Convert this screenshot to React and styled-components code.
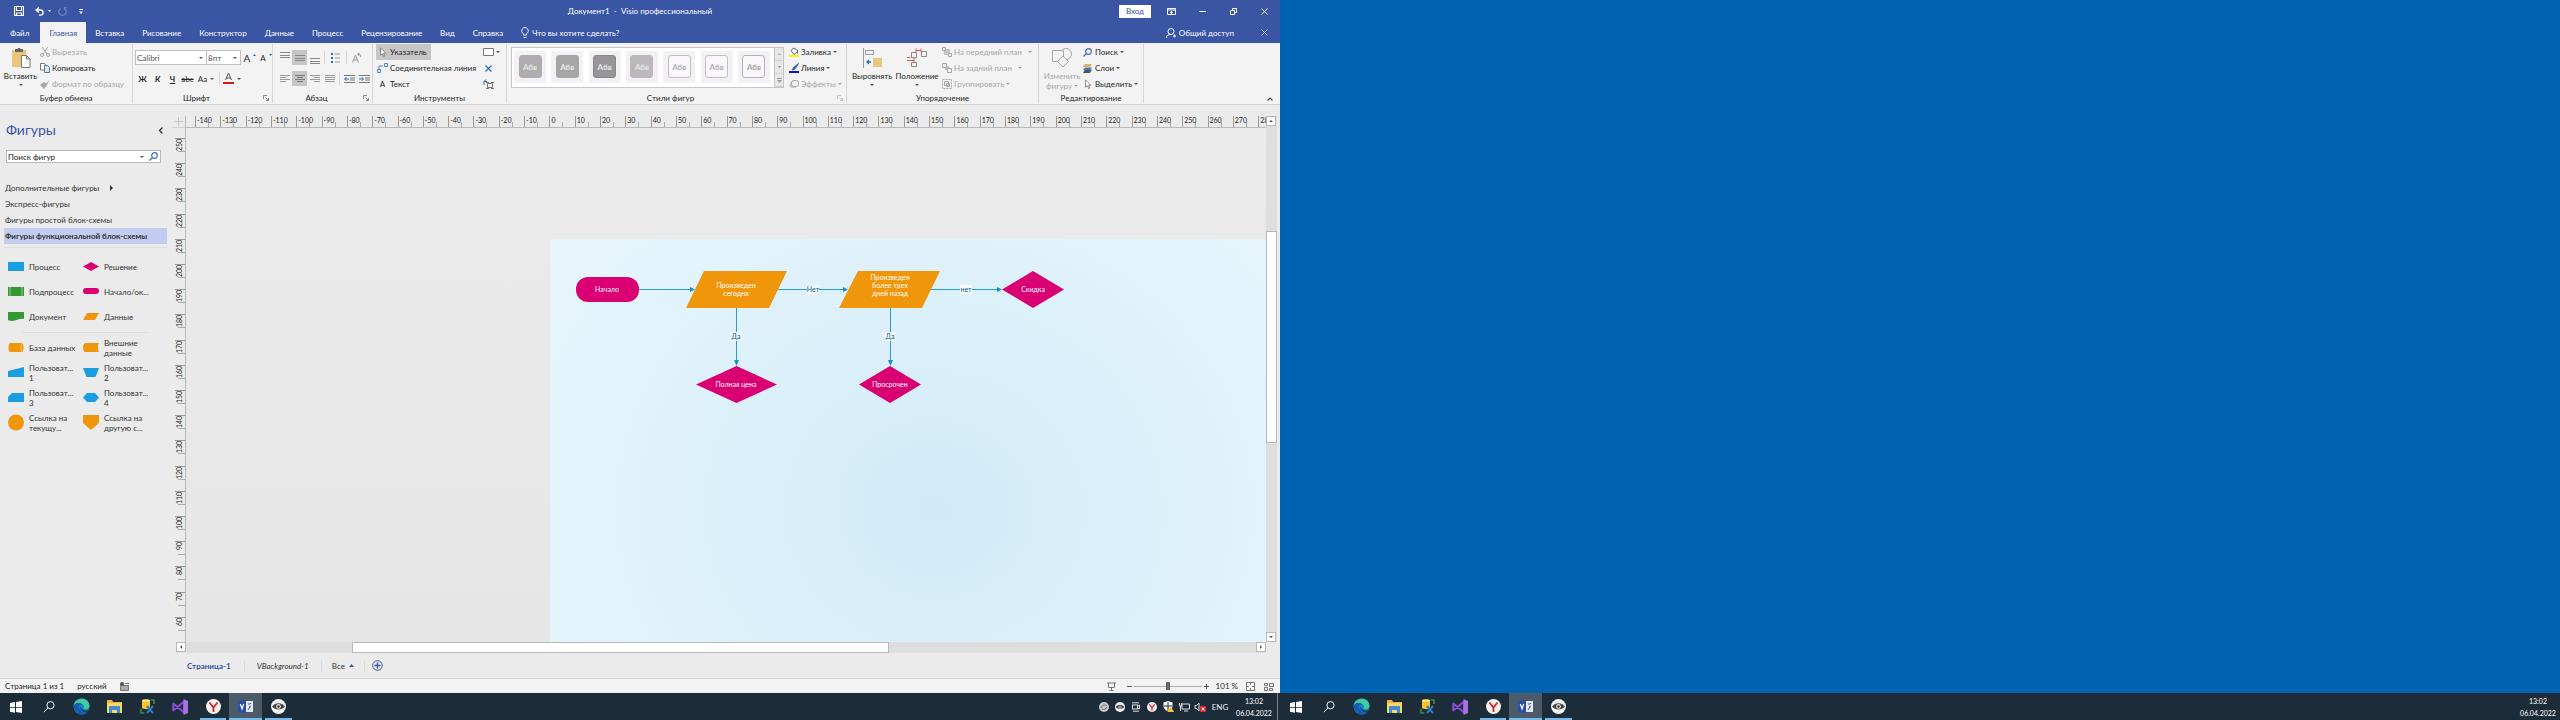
import React from "react";
import styled, { createGlobalStyle, css } from "styled-components";

const GlobalStyle = createGlobalStyle`
  * { box-sizing: border-box; }
  body { margin: 0; background: #0063b1; }
  body, button, input, select {
    font-family: Lato, "Open Sans", "Noto Sans", sans-serif;
    font-size: 8px;
    line-height: 10px;
    color: #262626;
  }
  button { border: 0; padding: 0; background: none; white-space: nowrap; }
  svg { display: block; flex: none; }
`;

const BLUE = "#3955a3";
const GREY = "#a6a6a6";

/* ---------- shared parts ---------- */

const Desktop = styled.div`
  display: flex;
  min-height: 100vh;
`;
const Monitor = styled.section`
  flex: 1 1 0;
  min-width: 0;
  display: flex;
  flex-direction: column;
  background: #0063b1;
`;
const Wallpaper = styled.div`
  flex: 1;
`;
const Svg = ({ w, h, children, vb }) => (
  <svg width={w} height={h} viewBox={vb || `0 0 ${w} ${h}`} fill="none" aria-hidden="true">
    {children}
  </svg>
);
const Caret = ({ color = "#555" }) => (
  <Svg w={4} h={2}>
    <path d="M0 0h4L2 2z" fill={color} />
  </Svg>
);

/* ---------- title bar and tabs ---------- */

const TitleBar = styled.header`
  display: grid;
  grid-template-columns: 1fr auto 1fr;
  align-items: center;
  height: 22px;
  background: ${BLUE};
  color: #fff;
`;
const QuickAccess = styled.div`
  display: flex;
  align-items: center;
  padding-left: 14px;
`;
const QuickButton = styled.button`
  display: flex;
  align-items: center;
  gap: 4px;
  margin-right: ${(p) => p.$after || 0}px;
`;
const WindowButtons = styled.div`
  display: flex;
  align-items: center;
  justify-content: flex-end;
`;
const SignIn = styled.button`
  width: 32px;
  height: 13px;
  margin-right: 5px;
  background: #fff;
  color: ${BLUE};
`;
const WindowButton = styled.button`
  display: grid;
  place-items: center;
  width: 31px;
  height: 20px;
`;
const TabBar = styled.nav`
  display: flex;
  height: 21px;
  padding-left: 1px;
  background: ${BLUE};
`;
const Tab = styled.button`
  padding: 0 9px;
  color: #fff;
  ${(p) => p.$file && css`margin-right: 2px;`}
  ${(p) => p.$active && css`background: #f3f3f3; color: ${BLUE};`}
`;
const TellMe = styled.button`
  display: flex;
  align-items: center;
  gap: 3px;
  margin-left: 9px;
  color: #fff;
`;
const Share = styled(TellMe)`
  margin-left: auto;
  margin-right: 15px;
`;

/* ---------- ribbon ---------- */

const Ribbon = styled.div`
  display: flex;
  height: 62px;
  padding-top: 1px;
  background: #f3f3f3;
  border-bottom: 1px solid #d2d2d2;
`;
const Group = styled.section`
  display: flex;
  flex-direction: column;
  flex: none;
  width: ${(p) => p.$width}px;
  margin-bottom: 1px;
  border-right: 1px solid #d6d6d6;
`;
const GroupBody = styled.div`
  display: flex;
  height: 48px;
  padding: 0 ${(p) => p.$right || 0}px 0 ${(p) => p.$left || 0}px;
  justify-content: ${(p) => (p.$spread ? "space-between" : "flex-start")};
`;
const GroupFooter = styled.footer`
  display: grid;
  grid-template-columns: ${(p) => (p.$launch ? "1fr 12px" : "1fr")};
  place-items: center;
  height: 11px;
`;
const RibbonEnd = styled.div`
  flex: 1;
  display: flex;
  align-items: flex-end;
  justify-content: flex-end;
  padding: 0 7px 3px;
`;
const BigButton = styled.button`
  display: flex;
  flex-direction: column;
  align-items: center;
  width: ${(p) => p.$width}px;
  padding-top: 4px;
  gap: 3px;
  color: ${(p) => (p.disabled ? GREY : "#262626")};
`;
const CaretLine = styled.span`
  display: flex;
  align-items: center;
  justify-content: center;
  gap: 2px;
`;
const Stack = styled.div`
  display: flex;
  flex-direction: column;
  align-items: flex-start;
  padding-top: ${(p) => p.$top || 0}px;
`;
const SmallButton = styled.button`
  display: flex;
  align-items: center;
  gap: 2px;
  height: 16px;
  padding: 0 ${(p) => (p.$pressed ? 4 : 1)}px 0 1px;
  color: ${(p) => (p.disabled ? GREY : "#262626")};
  background: ${(p) => (p.$pressed ? "#c6c6c6" : "transparent")};
`;
const IconCell = styled.span`
  display: grid;
  place-items: center;
  width: 11px;
`;
const ToolRow = styled.div`
  display: flex;
  align-items: center;
  height: 21px;
`;
const ToolButton = styled.button`
  display: flex;
  align-items: center;
  justify-content: center;
  gap: 3px;
  width: ${(p) => p.$width || 15}px;
  height: 15px;
  font-size: ${(p) => (p.$large ? 10 : 8)}px;
  font-weight: ${(p) => (p.$bold ? 700 : 400)};
  font-style: ${(p) => (p.$italic ? "italic" : "normal")};
  text-decoration: ${(p) => p.$line || "none"};
  background: ${(p) => (p.$pressed ? "#c6c6c6" : "transparent")};
`;
const Separator = styled.span`
  width: 1px;
  height: 13px;
  margin: 0 2px;
  background: #d6d6d6;
`;
const SelectBox = styled.label`
  display: grid;
  align-items: center;
  width: ${(p) => p.$width}px;
  height: 15px;
  margin-right: -1px;
  background: #fff;
  border: 1px solid #c0c0c0;
  select, svg { grid-area: 1 / 1; }
  select { appearance: none; border: 0; padding: 0 1px; background: none; outline: 0; color: #555; }
  svg { justify-self: end; margin-right: 3px; pointer-events: none; }
`;
const Gallery = styled.div`
  display: flex;
  width: 273px;
  height: 41px;
  margin: 3px 4px 0 0;
  background: #fff;
  border: 1px solid #c6c6c6;
`;
const GalleryItems = styled.div`
  flex: 1;
  display: flex;
  align-items: center;
  justify-content: space-between;
  padding: 0 4px 2px 2px;
`;
const StyleItem = styled.button`
  display: grid;
  place-items: center;
  width: 32px;
  height: 32px;
  background: #f5f0f7;
`;
const StyleSwatch = styled.span`
  display: grid;
  place-items: center;
  width: 23px;
  height: 23px;
  border: 1px solid ${(p) => p.$edge};
  border-radius: 3px;
  background: ${(p) => p.$fill};
  color: ${(p) => p.$ink};
  font-weight: 700;
`;
const GallerySteps = styled.div`
  display: grid;
  grid-template-rows: repeat(3, 1fr);
  width: 9px;
  background: #e8e8e8;
  border-left: 1px solid #c6c6c6;
  button { display: grid; place-items: center; border-bottom: 1px solid #d0d0d0; }
`;

/* ---------- workspace ---------- */

const Workspace = styled.main`
  flex: 1;
  display: flex;
  background: #ebebeb;
`;
const ShapesPane = styled.aside`
  width: 169px;
  flex: none;
  padding: 16px 2px 0 4px;
`;
const PaneHead = styled.div`
  display: flex;
  align-items: center;
  justify-content: space-between;
  padding: 0 4px 0 2px;
  h2 { margin: 0; font-size: 14px; line-height: 18px; font-weight: 400; color: ${BLUE}; }
`;
const SearchBox = styled.form`
  display: flex;
  align-items: center;
  gap: 5px;
  height: 13px;
  margin: 11px 6px 17px 2px;
  padding-right: 2px;
  background: #fff;
  border: 1px solid #b8b8b8;
  input { flex: 1; min-width: 0; border: 0; padding: 0 1px; background: none; color: #222; outline: 0; }
`;
const StencilButton = styled.button`
  display: flex;
  align-items: center;
  gap: 11px;
  width: 100%;
  height: 16px;
  padding-left: 1px;
  color: #333;
  ${(p) => p.$active && css`background: #c1ccf0; font-weight: 700;`}
`;
const ShapeGrid = styled.div`
  display: grid;
  grid-template-columns: 75px 1fr;
  grid-auto-rows: 25px;
  margin-top: ${(p) => p.$top}px;
  padding-left: 4px;
`;
const Rule = styled.hr`
  margin: 3px ${(p) => p.$side}px 0;
  border: 0;
  border-top: 1px solid #dedede;
`;
const ShapeButton = styled.button`
  display: flex;
  align-items: center;
  gap: 5px;
  text-align: left;
  white-space: pre;
  color: #333;
`;

const CanvasArea = styled.div`
  flex: 1;
  min-width: 0;
  display: grid;
  grid-template-columns: 14px minmax(0, 1fr) 11px;
  grid-template-rows: 12px minmax(0, 1fr) 11px 25px;
  padding: 11px 3px 0 3px;
`;
const RulerCorner = styled.div`
  display: grid;
  place-items: center;
  border-right: 1px solid #b8b8b8;
  border-bottom: 1px solid #cfcfcf;
`;
const HRuler = styled.div`
  display: flex;
  min-width: 0;
  overflow: hidden;
  padding-left: 9px;
  border-bottom: 1px solid #b8b8b8;
`;
const HMark = styled.span`
  flex: 0 0 calc(100% / 42.3);
  height: 11px;
  padding-left: 1px;
  border-left: 1px solid #999;
  font-size: 7px;
  line-height: 9px;
  background: linear-gradient(#aaa, #aaa) 12px 100% / 1px 5px no-repeat;
`;
const VRuler = styled.div`
  display: flex;
  flex-direction: column;
  padding-top: 10px;
  padding-left: 3px;
  border-right: 1px solid #b8b8b8;
`;
const VMark = styled.span`
  flex: 1;
  border-top: 1px solid #999;
  font-size: 7px;
  line-height: 8px;
  background: linear-gradient(#aaa, #aaa) 100% 12px / 7px 1px no-repeat;
  b { display: block; width: 8px; height: 14px; writing-mode: vertical-rl; transform: rotate(180deg); font-weight: 400; text-align: right; }
`;
const CanvasView = styled.div`
  display: flex;
  min-width: 0;
  min-height: 0;
  overflow: hidden;
  padding: 111px 0 0 364px;
  background: linear-gradient(#ebebeb, #e6e6e6);
`;
const Page = styled.div`
  flex: 1;
  min-width: 0;
  min-height: 0;
  background: radial-gradient(ellipse 440px 400px at 385px 270px, #d0eaf8, #d8eefa 30%, #e1f3fb 75%, #e6f5fc);
  svg { overflow: visible; }
  text { font-size: 7px; text-anchor: middle; }
`;
const Bar = styled.div`
  display: flex;
  flex-direction: ${(p) => (p.$vertical ? "column" : "row")};
  background: #dedede;
  ${(p) => p.$vertical && css`grid-row: 1 / 3; grid-column: 3;`}
  ${(p) => !p.$vertical && css`grid-column: 1 / 3; margin-left: 4px;`}
`;
const BarButton = styled.button`
  display: grid;
  place-items: center;
  flex: none;
  width: 10px;
  height: 10px;
  background: #fff;
  border: 1px solid #b8b8b8;
`;
const Space = styled.span`
  flex: ${(p) => p.$grow};
`;
const Thumb = styled(Space)`
  background: #fff;
  border: 1px solid #b8b8b8;
`;
const PageTabs = styled.div`
  grid-column: 1 / 4;
  display: flex;
  align-items: center;
  padding-left: 14px;
`;
const PageTab = styled.button`
  display: flex;
  align-items: center;
  gap: 4px;
  height: 12px;
  padding: 0 ${(p) => p.$pad}px 0 ${(p) => (p.$first ? 1 : p.$pad)}px;
  border-right: ${(p) => (p.$last ? 0 : "1px solid #dcdcdc")};
  font-weight: ${(p) => (p.$active ? 700 : 400)};
  font-style: ${(p) => (p.$italic ? "italic" : "normal")};
  color: ${(p) => (p.$active ? BLUE : "#333")};
`;
const StatusBar = styled.footer`
  display: flex;
  align-items: center;
  height: 15px;
  padding: 0 6px 0 5px;
  background: #f3f3f3;
  border-top: 1px solid #d6d6d6;
`;
const StatusText = styled.span`
  margin-right: 13px;
`;
const ZoomTools = styled.div`
  display: flex;
  align-items: center;
  margin-left: auto;
  button { display: grid; place-items: center; }
`;
const ZoomRange = styled.input`
  appearance: none;
  width: 68px;
  height: 9px;
  margin: 0 2px;
  background: linear-gradient(#aaa, #aaa) 0 4px / 100% 1px no-repeat;
  &::-webkit-slider-thumb { appearance: none; width: 4px; height: 8px; background: #666; }
`;
const ViewButton = styled.button`
  margin-right: ${(p) => p.$after || 0}px;
`;
const ZoomLabel = styled.button`
  margin: 0 8px 0 7px;
`;

/* ---------- taskbar ---------- */

const TaskBar = styled.footer`
  display: flex;
  height: 27px;
  background: #1c2c39;
`;
const TaskApps = styled.div`
  display: grid;
  grid-template-columns: repeat(9, 1fr);
  width: 295px;
`;
const TaskButton = styled.button`
  display: grid;
  place-items: center;
  padding-top: ${(p) => (p.$open ? 2 : 0)}px;
  border-bottom: ${(p) => (p.$open ? "2px solid #76b9ed" : "0")};
  margin: 0 ${(p) => (p.$open && !p.$active ? 3 : 0)}px;
  background: ${(p) => (p.$active ? "#4c5b68" : "transparent")};
`;
const Tray = styled.div`
  display: flex;
  align-items: center;
  margin-left: auto;
`;
const TrayButton = styled.button`
  display: grid;
  place-items: center;
  width: 16px;
`;
const Language = styled.button`
  width: 24px;
  color: #f0f0f0;
`;
const Clock = styled.time`
  width: 38px;
  margin: 0 ${(p) => (p.$edge ? 3 : 4)}px 0 3px;
  text-align: center;
  font-size: 7px;
  line-height: 12px;
  color: #fff;
`;
const ShowDesktop = styled.button`
  width: 3px;
  align-self: stretch;
  border-left: 1px solid #77838c;
`;

/* ---------- icons ---------- */

const AppIcons = {
  start: (
    <Svg w={12} h={12}>
      <path d="M0 2l5-1v5H0zM6 1l6-1v6H6zM0 6.800h5v5l-5-1zM6 6.800h6V12l-6-1z" fill="#fff" />
    </Svg>
  ),
  search: (
    <Svg w={12} h={12}>
      <circle cx="7.500" cy="4.200" r="3.600" stroke="#fff" />
      <path d="M4.800 7L.8 11.200" stroke="#fff" />
    </Svg>
  ),
  edge: (
    <Svg w={17} h={17}>
      <circle cx="8.500" cy="8.500" r="8" fill="#1583c9" />
      <path d="M.6 8C1.500-1 16-2 16.500 8c0 3-4 4-6 2.400 1-2 .3-4.500-2.400-4.700C5 5.500 2.500 6 .6 8z" fill="#42c9a0" />
      <path d="M.6 8C2 4 7 4 9 6.200 5 6 5 13 11 14.500c1 .3 3-.3 4-1C11 18.500 2 18 .6 8z" fill="#1160b0" />
      <path d="M8.500 6.500c-2 1.500-1 5.500 3.500 6 2 .2 3-.3 4-1-.7 1.500-1 2-2 2.800-6 .8-8.500-4.800-5.500-7.800z" fill="#1c2c39" opacity=".85" />
    </Svg>
  ),
  folder: (
    <Svg w={15} h={13}>
      <path d="M0 0h5l1 2h9v11H0z" fill="#f3b53a" />
      <path d="M0 3h15v10H0z" fill="#fbd76b" />
      <path d="M2 6h11v7h-3v-3H5v3H2z" fill="#3f8fcf" />
    </Svg>
  ),
  db: (
    <Svg w={15} h={15}>
      <path d="M2 1h8v8c-2 1.500-6 1.500-8 0z" fill="#f8c52c" />
      <ellipse cx="6" cy="1.500" rx="4" ry="1.200" fill="#fde68a" />
      <path d="M10.500 1H14v4M1 10v4h3.500" stroke="#4caf50" strokeWidth="1.200" />
      <path d="M7 7l6 7M13 7l-6 7" stroke="#2c7fc4" strokeWidth="2" />
    </Svg>
  ),
  vs: (
    <Svg w={16} h={16}>
      <path d="M1.300 4.500v7L12 2.500v11L1.300 4.500z" stroke="#8a4fd0" strokeWidth="2" strokeLinejoin="round" />
      <path d="M11.500 0L16 2v12l-4.500 2z" fill="#a970e8" />
    </Svg>
  ),
  yandex: (
    <Svg w={15} h={15}>
      <circle cx="7.500" cy="7.500" r="7.500" fill="#f2f2f2" />
      <path d="M3.500 3.500L7.500 8.500l4-5M7.500 8v5" stroke="#d8201f" strokeWidth="1.800" />
    </Svg>
  ),
  visio: (
    <Svg w={15} h={13}>
      <path d="M6 1h9v11H6z" fill="#e8ecf8" />
      <path d="M0 1l8-1v13l-8-1z" fill="#2b4fa5" />
      <path d="M2.300 4L4 9l1.700-5" stroke="#fff" strokeWidth="1.200" />
      <path d="M10 4h2l1-1M11 7l2-1M10 10l2-3" stroke="#3955a3" />
    </Svg>
  ),
  eye: (
    <Svg w={15} h={15}>
      <circle cx="7.500" cy="7.500" r="7.500" fill="#f4f4f4" />
      <path d="M1 7.500c3-4.500 10-4.500 13 0-3 4-10 4-13 0z" fill="#444" />
      <circle cx="7.500" cy="7.500" r="2.400" fill="#ddd" />
      <circle cx="7.500" cy="7.500" r="1.200" fill="#333" />
    </Svg>
  ),
};

const apps = [
  ["start", "Пуск"],
  ["search", "Поиск"],
  ["edge", "Edge"],
  ["folder", "Проводник"],
  ["db", "SQL"],
  ["vs", "Visual Studio"],
  ["yandex", "Яндекс", true],
  ["visio", "Visio", true, true],
  ["eye", "Просмотр", true],
];

const trayIcons = [
  <Svg w={10} h={10}>
    <circle cx="5" cy="5" r="5" fill="#c9c9c9" />
    <path d="M2 6c1-3 4-4 6-2M3 7c2 1 4 0 5-2" stroke="#666" />
  </Svg>,
  <Svg w={10} h={10} vb="0 0 15 15">{AppIcons.eye.props.children}</Svg>,
  <Svg w={10} h={10}>
    <rect x="1.500" y="3" width="5" height="4" stroke="#ddd" />
    <path d="M6.500 4.500L8.500 3v4l-2-1M1 .8h7M2 9.200h6" stroke="#ddd" />
  </Svg>,
  <Svg w={10} h={10} vb="0 0 15 15">{AppIcons.yandex.props.children}</Svg>,
  <Svg w={11} h={11}>
    <path d="M5 0l4.500 1.500V5c0 3-2 4-4.500 5.500C2.500 9 .5 8 .5 5V1.500z" fill="#fff" />
    <path d="M5 1v9M1 5h8" stroke="#1c2c39" />
    <path d="M7.500 5l3.500 6H4.500z" fill="#f6c52c" />
  </Svg>,
  <Svg w={11} h={10}>
    <path d="M3 2h7.500v5H3zM5 9h4M.5 1v3h2v-3M1.500 4v5" stroke="#ddd" />
  </Svg>,
  <Svg w={12} h={10}>
    <path d="M1 3.500h1.500L5 1v8L2.500 6.500H1z" stroke="#ddd" />
    <rect x="6" y="4" width="6" height="6" rx="1" fill="#e02a2a" />
    <path d="M7.500 5.500l3 3M10.500 5.500l-3 3" stroke="#fff" />
  </Svg>,
];

function TaskBarView({ tray }) {
  return (
    <TaskBar>
      <TaskApps>
        {apps.map(([id, name, open, active]) => (
          <TaskButton key={id} aria-label={name} $open={open} $active={active}>
            {AppIcons[id]}
          </TaskButton>
        ))}
      </TaskApps>
      <Tray>
        {tray && trayIcons.map((icon, i) => <TrayButton key={i} aria-label={`Значок ${i + 1}`}>{icon}</TrayButton>)}
        {tray && <Language>ENG</Language>}
        <Clock $edge={!tray}>
          13:02
          <br />
          06.04.2022
        </Clock>
        {tray && <ShowDesktop aria-label="Рабочий стол" />}
      </Tray>
    </TaskBar>
  );
}

const Bars = ({ xs, color = "#999", w = 10 }) => (
  <Svg w={w} h={8}>
    {xs.map(([x, len], i) => <path key={i} d={`M${x} ${i * 2 + 0.5}h${len}`} stroke={color} />)}
  </Svg>
);
const Lines = ({ top }) => (
  <Svg w={10} h={12}>
    {[0, 3, 5].map((y) => <path key={y} d={`M0 ${top + y + 0.5}h10`} stroke="#888" />)}
  </Svg>
);
const Launcher = ({ color = "#888" }) => (
  <Svg w={6} h={6}>
    <path d="M.5 4V.5H4M2.500 2.500l3 3M5.500 3v2.500H3" stroke={color} />
  </Svg>
);
const Cursor = () => (
  <Svg w={8} h={10}>
    <path d="M1.500.8v7.500l2-1.700 1.200 3 1-.5-1.200-2.800h2.300z" fill="#fff" stroke="#777" strokeWidth=".8" />
  </Svg>
);
const Magnifier = () => (
  <Svg w={9} h={9}>
    <circle cx="5.500" cy="3.500" r="2.800" stroke="#3b6fb5" strokeWidth="1.200" />
    <path d="M3.500 5.500L.5 8.500" stroke="#3b6fb5" strokeWidth="1.300" />
  </Svg>
);

function Footer({ children, launch, color }) {
  return (
    <GroupFooter $launch={launch}>
      <span>{children}</span>
      {launch && (
        <button aria-label={`Параметры: ${children}`}>
          <Launcher color={color} />
        </button>
      )}
    </GroupFooter>
  );
}

const Indent = ({ flip }) => (
  <Svg w={11} h={8}>
    <path d="M0 .5h11M6 3h5M6 5h5M0 7.500h11" stroke="#777" />
    <path d={flip ? "M0 4h4M2.500 2l2 2-2 2" : "M1 4h4M2.500 2l-2 2 2 2"} stroke="#2b6cb8" />
  </Svg>
);

const swatches = [
  ["#adadad", "#adadad", "#e6e6e6"],
  ["#a6a6a6", "#a6a6a6", "#e6e6e6"],
  ["#969696", "#888", "#e6e6e6"],
  ["#b9b9b9", "#b9b9b9", "#e6e6e6"],
  ["#faf7fb", "#c3bec6", "#b5b0b8"],
  ["#faf7fb", "#c3bec6", "#b5b0b8"],
  ["#faf7fb", "#b5b0b8", "#a8a3ab"],
];

function RibbonView() {
  return (
    <Ribbon>
      <Group $width={133}>
        <GroupBody $left={3}>
          <BigButton $width={35}>
            <Svg w={20} h={20}>
              <path d="M1 2h14v17H1z" fill="#ecc57c" />
              <path d="M4 1h2.500a1.600 1.600 0 013 0H12v3H4z" fill="#666" />
              <path d="M10.500 7.500h5l3.500 3.500v8.500h-8.500z" fill="#fff" stroke="#777" />
              <path d="M15.500 7.500V11H19" stroke="#777" />
            </Svg>
            Вставить
            <Caret />
          </BigButton>
          <Stack>
            <SmallButton disabled>
              <IconCell>
                <Svg w={10} h={10}>
                  <path d="M2 0l5 7M8 0L3 7" stroke={GREY} />
                  <circle cx="2" cy="8" r="1.500" stroke={GREY} />
                  <circle cx="8" cy="8" r="1.500" stroke={GREY} />
                </Svg>
              </IconCell>
              Вырезать
            </SmallButton>
            <SmallButton>
              <IconCell>
                <Svg w={10} h={10}>
                  <path d="M.5.5h4l1 1.500v5h-5z" fill="#fff" stroke="#777" />
                  <path d="M4.500 2.500h3l2 2v5h-5z" fill="#dfe8f5" stroke="#55749f" />
                </Svg>
              </IconCell>
              Копировать
            </SmallButton>
            <SmallButton disabled>
              <IconCell>
                <Svg w={10} h={9}>
                  <path d="M9.500 0L6 3.500 4 2 0 5l4 4 3-4z" fill={GREY} />
                </Svg>
              </IconCell>
              Формат по образцу
            </SmallButton>
          </Stack>
        </GroupBody>
        <Footer>Буфер обмена</Footer>
      </Group>

      <Group $width={140}>
        <GroupBody $left={2}>
          <Stack $top={3}>
            <ToolRow>
              <SelectBox $width={72}>
                <select aria-label="Шрифт"><option>Calibri</option></select>
                <Caret />
              </SelectBox>
              <SelectBox $width={35}>
                <select aria-label="Размер шрифта"><option>8пт</option></select>
                <Caret />
              </SelectBox>
              <ToolButton $width={20} $large>A<Svg w={3} h={8}><path d="M0 2l1.500-2L3 2z" fill="#2b6cb8" /></Svg></ToolButton>
              <ToolButton $width={12}>A<Svg w={3} h={8}><path d="M0 0l1.500 2L3 0z" fill="#2b6cb8" /></Svg></ToolButton>
            </ToolRow>
            <ToolRow>
              <ToolButton $bold>Ж</ToolButton>
              <ToolButton $bold $italic>К</ToolButton>
              <ToolButton $bold $line="underline">Ч</ToolButton>
              <ToolButton $line="line-through">abc</ToolButton>
              <ToolButton $width={22}>Aa<Caret /></ToolButton>
              <Separator />
              <ToolButton $width={20} aria-label="Цвет текста">
                <Svg w={11} h={11}>
                  <path d="M2.500 7L5.500 0l3 7M3.500 5h4" stroke="#555" />
                  <path d="M0 9h11v2H0z" fill="#e0141b" />
                </Svg>
                <Caret />
              </ToolButton>
            </ToolRow>
          </Stack>
        </GroupBody>
        <Footer launch>Шрифт</Footer>
      </Group>

      <Group $width={100}>
        <GroupBody $left={4}>
          <Stack $top={3}>
            <ToolRow>
              <ToolButton aria-label="По верхнему краю"><Lines top={0} /></ToolButton>
              <ToolButton aria-label="По середине" $pressed><Lines top={3} /></ToolButton>
              <ToolButton aria-label="По нижнему краю"><Lines top={6} /></ToolButton>
              <Separator />
              <ToolButton aria-label="Маркеры" $width={17}>
                <Svg w={9} h={10}>
                  <path d="M0 1h2M0 5h2M0 9h2" stroke="#2b6cb8" strokeWidth="2" />
                  <path d="M4 1h5M4 5h5M4 9h5" stroke="#999" />
                </Svg>
              </ToolButton>
              <Separator />
              <ToolButton aria-label="Повернуть текст">
                <Svg w={10} h={10}>
                  <path d="M.5 9.500L3.500 2l3 7.500M1.500 7h4M5 1.500c2-1.500 4 0 3.500 2.500M8 0l-2 1 1 2" stroke="#999" />
                </Svg>
              </ToolButton>
            </ToolRow>
            <ToolRow>
              <ToolButton aria-label="По левому краю"><Bars xs={[[0, 10], [0, 6], [0, 10], [0, 6]]} /></ToolButton>
              <ToolButton aria-label="По центру" $pressed><Bars xs={[[0, 10], [2, 6], [0, 10], [2, 6]]} color="#777" /></ToolButton>
              <ToolButton aria-label="По правому краю"><Bars xs={[[0, 10], [4, 6], [0, 10], [4, 6]]} /></ToolButton>
              <ToolButton aria-label="По ширине"><Bars xs={[[0, 10], [0, 10], [0, 10], [0, 10]]} /></ToolButton>
              <Separator />
              <ToolButton aria-label="Уменьшить отступ"><Indent /></ToolButton>
              <ToolButton aria-label="Увеличить отступ"><Indent flip /></ToolButton>
            </ToolRow>
          </Stack>
        </GroupBody>
        <Footer launch>Абзац</Footer>
      </Group>

      <Group $width={134}>
        <GroupBody $left={3} $right={5} $spread>
          <Stack>
            <SmallButton $pressed>
              <IconCell><Cursor /></IconCell>
              Указатель
            </SmallButton>
            <SmallButton>
              <IconCell>
                <Svg w={11} h={10}>
                  <path d="M.5 6.500h3v3h-3zM7.500.5h3v3h-3zM2 6V3h4" stroke="#4a86c5" />
                </Svg>
              </IconCell>
              Соединительная линия
            </SmallButton>
            <SmallButton>
              <IconCell>A</IconCell>
              Текст
            </SmallButton>
          </Stack>
          <Stack>
            <SmallButton aria-label="Прямоугольник">
              <Svg w={11} h={8}><path d="M.5.5h10v7H.5z" fill="#fff" stroke="#777" /></Svg>
              <Caret />
            </SmallButton>
            <SmallButton aria-label="Точка соединения">
              <Svg w={11} h={7}><path d="M2.500.5l6 6M8.500.5l-6 6" stroke="#2b6cb8" strokeWidth="1.200" /></Svg>
            </SmallButton>
            <SmallButton aria-label="Текстовый блок">
              <Svg w={11} h={10}>
                <path d="M4.500 4.500h5v4h-5z" stroke="#777" />
                <path d="M3 3.500h3M8 3.500h3M3 9.500h3M8 9.500h3" stroke="#777" />
                <path d="M1 6V2.500h3M3 .5l-2 2" stroke="#2b6cb8" />
              </Svg>
            </SmallButton>
          </Stack>
        </GroupBody>
        <Footer>Инструменты</Footer>
      </Group>

      <Group $width={340}>
        <GroupBody $left={4}>
          <Gallery>
            <GalleryItems>
              {swatches.map(([fill, edge, ink], i) => (
                <StyleItem key={i}>
                  <StyleSwatch $fill={fill} $edge={edge} $ink={ink}>Абв</StyleSwatch>
                </StyleItem>
              ))}
            </GalleryItems>
            <GallerySteps>
              <button aria-label="Вверх"><Svg w={3} h={2}><path d="M0 2L1.500 0 3 2z" fill="#aaa" /></Svg></button>
              <button aria-label="Вниз"><Svg w={3} h={2}><path d="M0 0h3L1.500 2z" fill="#888" /></Svg></button>
              <button aria-label="Ещё"><Svg w={5} h={5}><path d="M0 .5h5" stroke="#999" /><path d="M0 2h5L2.500 5z" fill="#999" /></Svg></button>
            </GallerySteps>
          </Gallery>
          <Stack>
            <SmallButton>
              <Svg w={10} h={10}>
                <path d="M2 3.500L5 1l4 3-4 3.500z" fill="#fff" stroke="#666" />
                <path d="M8.500 3v3.500" stroke="#2b6cb8" />
                <path d="M0 8h10v2H0z" fill="#fff200" />
              </Svg>
              Заливка <Caret />
            </SmallButton>
            <SmallButton>
              <Svg w={10} h={10}>
                <path d="M9.500.5L5 4 3 7l3-1z" fill="#2b6cb8" stroke="#2b6cb8" />
                <path d="M0 8h10v2H0z" fill="#1010e0" />
              </Svg>
              Линия <Caret />
            </SmallButton>
            <SmallButton disabled>
              <Svg w={10} h={9}>
                <rect x=".5" y="2" width="7" height="6" rx="2.500" fill="#c8c8c8" />
                <rect x="2.500" y=".5" width="7" height="6" rx="2" fill="#f3f3f3" stroke={GREY} />
              </Svg>
              Эффекты <Caret color={GREY} />
            </SmallButton>
          </Stack>
        </GroupBody>
        <Footer launch color="#c4c4c4">Стили фигур</Footer>
      </Group>

      <Group $width={192}>
        <GroupBody $left={4}>
          <BigButton $width={42}>
            <Svg w={20} h={20}>
              <path d="M1.500 0v20M3.500 2.500h8v4h-8z" stroke="#999" />
              <path d="M11 10h9v9h-9z" fill="#ecc57c" />
              <path d="M9 14H5M7 12l-2 2 2 2" stroke="#2b6cb8" strokeWidth="1.300" />
            </Svg>
            Выровнять
            <Caret />
          </BigButton>
          <BigButton $width={48}>
            <Svg w={20} h={20}>
              <path d="M4.500 4.500h5v5h-5zM14.500 3.500h5v5h-5zM4.500 14.500h5v4h-5z" stroke="#888" />
              <path d="M9 2.500h5M9 .5v4M14 .5v4M0 9.500h3.500M0 12.500h7M7 10v4" stroke="#d9604e" />
            </Svg>
            Положение
            <Caret />
          </BigButton>
          <Stack>
            <SmallButton disabled>
              <Svg w={10} h={10}>
                <path d="M2 2h6v6H2z" fill="#c4c4c4" />
                <path d="M.5.5h3v3h-3zM6.500 6.500h3v3h-3z" fill="#f3f3f3" stroke={GREY} />
              </Svg>
              {"На передний план\u00a0\u00a0"} <Caret color={GREY} />
            </SmallButton>
            <SmallButton disabled>
              <Svg w={10} h={10}>
                <path d="M3 3h4v4H3z" fill="#c4c4c4" />
                <path d="M.5.5h4v4h-4zM5.500 5.500h4v4h-4z" fill="#f3f3f3" stroke={GREY} />
              </Svg>
              {"На задний план\u00a0\u00a0"} <Caret color={GREY} />
            </SmallButton>
            <SmallButton disabled>
              <Svg w={10} h={10}>
                <path d="M.5.5h9v9h-9z" stroke={GREY} strokeDasharray="2 1" />
                <path d="M2.500 2.500h4v4h-4zM4.500 4.500h3v3h-3z" stroke={GREY} />
              </Svg>
              Группировать <Caret color={GREY} />
            </SmallButton>
          </Stack>
        </GroupBody>
        <Footer>Упорядочение</Footer>
      </Group>

      <Group $width={105}>
        <GroupBody $left={4}>
          <BigButton $width={38} disabled>
            <Svg w={20} h={20}>
              <circle cx="14" cy="6" r="5.500" stroke={GREY} />
              <path d="M.5 2.500h11v11H.5z" fill="#f3f3f3" stroke={GREY} />
              <path d="M11 8l5.500 5.500L11 19l-5.500-5.500z" fill="#f3f3f3" stroke={GREY} />
            </Svg>
            <span>
              Изменить
              <CaretLine>фигуру <Caret color={GREY} /></CaretLine>
            </span>
          </BigButton>
          <Stack>
            <SmallButton><IconCell><Magnifier /></IconCell>Поиск <Caret /></SmallButton>
            <SmallButton>
              <IconCell>
                <Svg w={9} h={9}>
                  <path d="M2 5.500h7L7 9H0z" fill="#555" />
                  <path d="M2 3.500h7L7 6H0z" fill="#3b7cc4" />
                  <path d="M2 0h7L7 3H0z" fill="#e0b35c" />
                </Svg>
              </IconCell>
              Слои <Caret />
            </SmallButton>
            <SmallButton><IconCell><Cursor /></IconCell>Выделить <Caret /></SmallButton>
          </Stack>
        </GroupBody>
        <Footer>Редактирование</Footer>
      </Group>
      <RibbonEnd>
        <button aria-label="Свернуть ленту"><Svg w={6} h={4}><path d="M.5 3.500L3 1l2.500 2.500" stroke="#444" strokeWidth="1.200" /></Svg></button>
      </RibbonEnd>
    </Ribbon>
  );
}

const C_BLUE = "#1b9de2";
const C_PINK = "#da0073";
const C_GREEN = "#339933";
const C_ORANGE = "#f0960a";

const basicShapes = [
  ["Процесс", <path d="M0 2h16v9H0z" fill={C_BLUE} />],
  ["Решение", <path d="M0 6.500L8 2l8 4.500L8 11z" fill={C_PINK} />],
  ["Подпроцесс", <><path d="M0 2h16v9H0z" fill={C_GREEN} /><path d="M2 2v9M14 2v9" stroke="#bfe3bf" strokeWidth=".7" /></>],
  ["Начало/ок...", <rect y="3" width="16" height="6" rx="3" fill={C_PINK} />],
  ["Документ", <path d="M0 2h16v7c-5-1-7 2-12 2-2 0-4-1-4-1z" fill={C_GREEN} />],
  ["Данные", <path d="M4 3h12l-4 7H0z" fill={C_ORANGE} />],
];
const moreShapes = [
  ["База данных", <><path d="M2 2h12c2 0 2 9 0 9H2c-2 0-2-9 0-9z" fill={C_ORANGE} /><path d="M14 2c-1.500 2-1.500 7 0 9" stroke="#fbd9a0" strokeWidth=".7" /></>],
  ["Внешние\nданные", <path d="M2 2h14c-1.500 2-1.500 7 0 9H2C-.5 10-.5 3 2 2z" fill={C_ORANGE} />],
  ["Пользоват...\n1", <path d="M0 5l16-4v10H0z" fill={C_BLUE} />],
  ["Пользоват...\n2", <path d="M0 2h16l-3.500 9h-9z" fill={C_BLUE} />],
  ["Пользоват...\n3", <path d="M4 2h12v9H0V6z" fill={C_BLUE} />],
  ["Пользоват...\n4", <path d="M4 2h8l4 4.500-4 4.500H4L0 6.500z" fill={C_BLUE} />],
  ["Ссылка на\nтекущу...", <circle cx="8" cy="6.500" r="8" fill={C_ORANGE} />],
  ["Ссылка на\nдругую с...", <path d="M0-1h16v8l-8 7-8-7z" fill={C_ORANGE} />],
];

const ShapeList = ({ items, top }) => (
  <ShapeGrid $top={top}>
    {items.map(([name, shape]) => (
      <ShapeButton key={name}>
        <svg width="16" height="13" viewBox="0 0 16 13" fill="none" overflow="visible" aria-hidden="true">{shape}</svg>
        {name}
      </ShapeButton>
    ))}
  </ShapeGrid>
);

function ShapesPaneView() {
  return (
    <ShapesPane>
      <PaneHead>
        <h2>Фигуры</h2>
        <button aria-label="Свернуть"><Svg w={5} h={7}><path d="M4.500.5l-3 3 3 3" stroke="#333" strokeWidth="1.300" /></Svg></button>
      </PaneHead>
      <SearchBox>
        <input aria-label="Поиск фигур" defaultValue="Поиск фигур" />
        <Caret />
        <Magnifier />
      </SearchBox>
      <StencilButton>
        Дополнительные фигуры
        <Svg w={3} h={6}><path d="M0 0l3 3-3 3z" fill="#333" /></Svg>
      </StencilButton>
      <StencilButton>Экспресс-фигуры</StencilButton>
      <StencilButton>Фигуры простой блок-схемы</StencilButton>
      <StencilButton $active>Фигуры функциональной блок-схемы</StencilButton>
      <Rule $side={0} />
      <ShapeList items={basicShapes} top={6} />
      <Rule $side={18} />
      <ShapeList items={moreShapes} top={2} />
    </ShapesPane>
  );
}

const nodes = [
  { lines: ["Начало"], x: 57, y: 50, shape: <rect x="26" y="38" width="63" height="25" rx="12" fill={C_PINK} /> },
  { lines: ["Произведен", "сегодня"], x: 186, y: 50, shape: <path d="M154 32h83l-18 37h-83z" fill={C_ORANGE} /> },
  { lines: ["Произведен", "более трех", "дней назад"], x: 340, y: 46, shape: <path d="M308 32h82l-18 37h-83z" fill={C_ORANGE} /> },
  { lines: ["Скидка"], x: 483, y: 50, shape: <path d="M452 50.500l31-18.500 31 18.500L483 69z" fill={C_PINK} /> },
  { lines: ["Полная цена"], x: 186, y: 145, shape: <path d="M146 145.500L186.500 127l40.500 18.500L186.500 164z" fill={C_PINK} /> },
  { lines: ["Просрочен"], x: 340, y: 145, shape: <path d="M309 145.500l31-18.500 31 18.500L340 164z" fill={C_PINK} /> },
];
const links = [
  { d: "M89 50.500h51", tip: "M140 48l5 2.500-5 2.500z" },
  { d: "M227 50.500h66", tip: "M293 48l5 2.500-5 2.500z", label: "Нет", x: 263, y: 50 },
  { d: "M381 50.500h66", tip: "M447 48l5 2.500-5 2.500z", label: "нет", x: 416, y: 50 },
  { d: "M186.500 69v53", tip: "M184 121l2.500 6 2.500-6z", label: "Да", x: 186, y: 97 },
  { d: "M340.500 69v53", tip: "M338 121l2.500 6 2.500-6z", label: "Да", x: 340, y: 97 },
];

const Flowchart = () => (
  <svg width="100%" height="200" role="img" aria-label="Блок-схема">
    {links.map((l) => (
      <g key={l.d}>
        <path d={l.d} stroke="#2a9bd6" />
        <path d={l.tip} fill="#1b8fd0" />
        {l.label && <rect x={l.x - 6} y={l.y - 4} width="12" height="9" fill="#f4fafd" />}
        {l.label && <text x={l.x} y={l.y + 3} fill="#135d85">{l.label}</text>}
      </g>
    ))}
    {nodes.map((n) => (
      <g key={n.x + n.lines[0] + n.y}>
        {n.shape}
        {n.lines.map((t, i) => (
          <text key={t} x={n.x} y={n.y + 3 + (i * 2 - (n.lines.length - 1)) * 4} fill="#fff">{t}</text>
        ))}
      </g>
    ))}
  </svg>
);

const hMarks = Array.from({ length: 43 }, (_, i) => -140 + i * 10);
const vMarks = Array.from({ length: 20 }, (_, i) => 250 - i * 10);

function CanvasPane() {
  return (
    <CanvasArea>
      <RulerCorner>
        <Svg w={9} h={9}><path d="M0 4.500h9M4.500 0v9" stroke="#c4c4c4" /></Svg>
      </RulerCorner>
      <HRuler>{hMarks.map((n) => <HMark key={n}>{n}</HMark>)}</HRuler>
      <Bar $vertical>
        <BarButton aria-label="Вверх"><Svg w={4} h={2}><path d="M0 2l2-2 2 2z" fill="#555" /></Svg></BarButton>
        <Space $grow={105} />
        <Thumb $grow={211} />
        <Space $grow={189} />
        <BarButton aria-label="Вниз"><Svg w={4} h={2}><path d="M0 0h4L2 2z" fill="#555" /></Svg></BarButton>
      </Bar>
      <VRuler>{vMarks.map((n) => <VMark key={n}><b>{n}</b></VMark>)}</VRuler>
      <CanvasView>
        <Page><Flowchart /></Page>
      </CanvasView>
      <Bar>
        <BarButton aria-label="Влево"><Svg w={2} h={4}><path d="M2 0v4L0 2z" fill="#555" /></Svg></BarButton>
        <Space $grow={166} />
        <Thumb $grow={536} />
        <Space $grow={367} />
        <BarButton aria-label="Вправо"><Svg w={2} h={4}><path d="M0 0v4l2-2z" fill="#555" /></Svg></BarButton>
      </Bar>
      <PageTabs>
        <PageTab $active $first $pad={13}>Страница-1</PageTab>
        <PageTab $italic $pad={12}>VBackground-1</PageTab>
        <PageTab $pad={10}>Все<Svg w={5} h={3}><path d="M0 3h5L2.500 0z" fill={BLUE} /></Svg></PageTab>
        <PageTab $last $pad={7} aria-label="Новая страница">
          <Svg w={11} h={11}>
            <circle cx="5.500" cy="5.500" r="4.800" stroke={BLUE} />
            <path d="M2.500 5.500h6M5.500 2.500v6" stroke={BLUE} strokeWidth="1.400" />
          </Svg>
        </PageTab>
      </PageTabs>
    </CanvasArea>
  );
}

export default function App() {
  return (
    <Desktop>
      <GlobalStyle />
      <Monitor>
        <TitleBar>
          <QuickAccess>
            <QuickButton $after={11} aria-label="Сохранить">
              <Svg w={10} h={10}><path d="M.5.5h9v9h-9zM2.500.5v4h5v-4M2.500 9.500V7h5v2.500" stroke="#fff" strokeWidth="1.200" /></Svg>
            </QuickButton>
            <QuickButton $after={7} aria-label="Отменить">
              <Svg w={9} h={9}><path d="M4 .5L1 3l3 2.500M1 3h4.500a2.600 2.600 0 010 5.200H4" stroke="#fff" strokeWidth="1.300" /></Svg>
              <Svg w={3} h={2}><path d="M0 0h3L1.500 2z" fill="#fff" /></Svg>
            </QuickButton>
            <QuickButton $after={12} aria-label="Повторить">
              <Svg w={9} h={9}><path d="M6.500 1.500A3.700 3.700 0 112.500 1.500M8.500.5h-2v2.500" stroke="#7084c0" strokeWidth="1.200" /></Svg>
            </QuickButton>
            <QuickButton aria-label="Настроить панель">
              <Svg w={4} h={5}><path d="M0 .5h4" stroke="#fff" /><path d="M0 2.500h4L2 5z" fill="#fff" /></Svg>
            </QuickButton>
          </QuickAccess>
          <span>Документ1 &nbsp;-&nbsp; Visio профессиональный</span>
          <WindowButtons>
            <SignIn>Вход</SignIn>
            <WindowButton aria-label="Параметры ленты">
              <Svg w={9} h={7}><path d="M.5.5h8v6h-8zM.5 2h8M4.500 3v3M3 4.500h3" stroke="#fff" /></Svg>
            </WindowButton>
            <WindowButton aria-label="Свернуть"><Svg w={7} h={1}><path d="M0 .5h7" stroke="#fff" /></Svg></WindowButton>
            <WindowButton aria-label="Развернуть">
              <Svg w={7} h={7}><path d="M.5 2.500h4v4h-4zM2.500 2V.5h4v4H5" stroke="#fff" /></Svg>
            </WindowButton>
            <WindowButton aria-label="Закрыть"><Svg w={7} h={7}><path d="M.5.5l6 6M6.500.5l-6 6" stroke="#fff" /></Svg></WindowButton>
          </WindowButtons>
        </TitleBar>
        <TabBar>
          <Tab $file>Файл</Tab>
          <Tab $active>Главная</Tab>
          {["Вставка", "Рисование", "Конструктор", "Данные", "Процесс", "Рецензирование", "Вид", "Справка"].map((t) => (
            <Tab key={t}>{t}</Tab>
          ))}
          <TellMe>
            <Svg w={8} h={11}><path d="M2.500 8V6.800a3.300 3.300 0 113 0V8zM2.500 10.300h3" stroke="#fff" strokeWidth=".9" /></Svg>
            Что вы хотите сделать?
          </TellMe>
          <Share>
            <Svg w={10} h={10}>
              <circle cx="5" cy="3.500" r="3" stroke="#fff" />
              <path d="M.5 10c0-3 2-3.500 4.500-3.500M7 8h3M8.500 6.500v3" stroke="#fff" />
            </Svg>
            Общий доступ
          </Share>
          <WindowButton aria-label="Закрыть окно"><Svg w={7} h={7}><path d="M.5.5l6 6M6.500.5l-6 6" stroke="#ccd3ea" /></Svg></WindowButton>
        </TabBar>
        <RibbonView />
        <Workspace>
          <ShapesPaneView />
          <CanvasPane />
        </Workspace>
        <StatusBar>
          <StatusText>Страница 1 из 1</StatusText>
          <StatusText>русский</StatusText>
          <Svg w={9} h={9}><path d="M.5 3.500h8v5h-8z" stroke="#777" fill="#aaa" /><circle cx="2" cy="2" r="2" fill="#555" /><path d="M5 1.500h4" stroke="#777" /></Svg>
          <ZoomTools>
            <ViewButton $after={11} aria-label="Режим презентации">
              <Svg w={9} h={9}><path d="M0 1h9M1.500 1v4.500h6V1M4.500 6v2M2.500 8.500h4" stroke="#777" /></Svg>
            </ViewButton>
            <button aria-label="Уменьшить"><Svg w={5} h={5}><path d="M0 2.500h5" stroke="#555" /></Svg></button>
            <ZoomRange type="range" aria-label="Масштаб" defaultValue={51} />
            <button aria-label="Увеличить"><Svg w={5} h={5}><path d="M0 2.500h5M2.500 0v5" stroke="#555" /></Svg></button>
            <ZoomLabel>101 %</ZoomLabel>
            <ViewButton $after={9} aria-label="По размеру окна">
              <Svg w={9} h={9}><path d="M.5.5h8v8h-8zM4.500 0v3M4.500 6v3M0 4.500h3M6 4.500h3" stroke="#777" /></Svg>
            </ViewButton>
            <ViewButton aria-label="Сменить окно">
              <Svg w={10} h={9}><path d="M.5 1.500h3v2h-3zM5.500 1.500h4v3h-4zM.5 5.500h3v3h-3zM5.500 6.500h3v2h-3z" stroke="#777" /></Svg>
            </ViewButton>
          </ZoomTools>
        </StatusBar>
        <TaskBarView tray />
      </Monitor>
      <Monitor>
        <Wallpaper />
        <TaskBarView />
      </Monitor>
    </Desktop>
  );
}
